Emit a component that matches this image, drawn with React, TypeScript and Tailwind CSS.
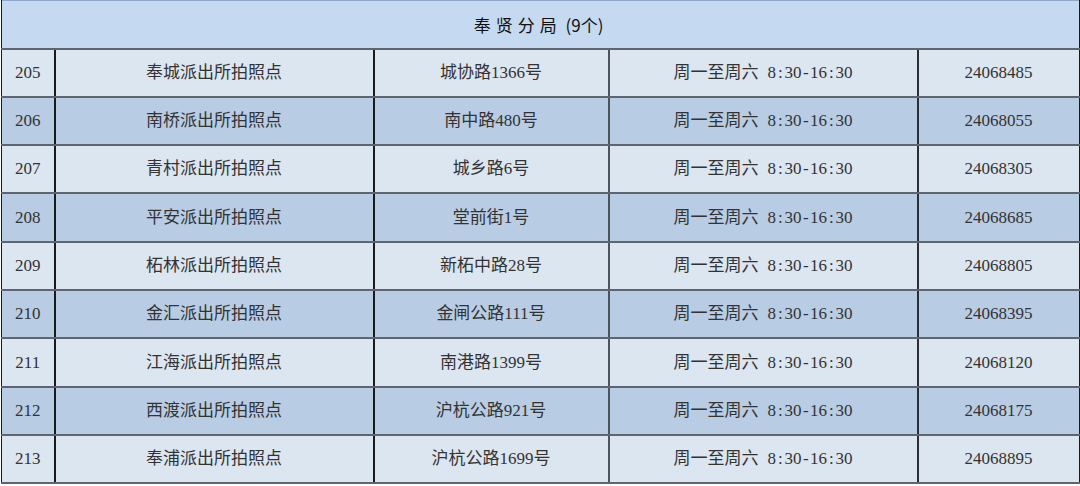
const rows = [
  ["205", "奉城派出所拍照点", "城协路1366号", "24068485"],
  ["206", "南桥派出所拍照点", "南中路480号", "24068055"],
  ["207", "青村派出所拍照点", "城乡路6号", "24068305"],
  ["208", "平安派出所拍照点", "堂前街1号", "24068685"],
  ["209", "柘林派出所拍照点", "新柘中路28号", "24068805"],
  ["210", "金汇派出所拍照点", "金闸公路111号", "24068395"],
  ["211", "江海派出所拍照点", "南港路1399号", "24068120"],
  ["212", "西渡派出所拍照点", "沪杭公路921号", "24068175"],
  ["213", "奉浦派出所拍照点", "沪杭公路1699号", "24068895"],
]

// half-width glyph box so ":" and "-" take the same width as a digit
function Hw({ c }: { c: string }) {
  return <span className="inline-block w-[8.5px] text-center">{c}</span>
}

export default function App() {
  return (
    <div className="w-[1080px] h-[486px] bg-white overflow-hidden">
      <table
        className="ml-px w-[1078px] border-collapse table-fixed text-[17px] text-[#333333]"
        style={{ fontFamily: '"Liberation Serif", "Noto Sans CJK SC", serif' }}
      >
        <colgroup>
          <col className="w-[53px]" />
          <col className="w-[319px]" />
          <col className="w-[235px]" />
          <col className="w-[309px]" />
          <col className="w-[162px]" />
        </colgroup>
        <thead>
          <tr className="h-[48px] bg-[#c5d9f1] border-t border-[#8ea9c8]">
            <th
              colSpan={5}
              className="pr-[4px] font-normal text-[17px] text-[#111111] border-b-2 border-b-[#5f656e] border-x border-x-[#1a1a1a]"
              style={{ fontFamily: '"Noto Sans CJK SC", sans-serif' }}
            >
              <span className="tracking-[5px]">奉贤分局</span>
              <span> (9个)</span>
            </th>
          </tr>
        </thead>
        <tbody>
          {rows.map((r, i) => (
            <tr
              key={r[0]}
              className={`h-[48.3px] ${i % 2 === 0 ? "bg-[#dce6f1]" : "bg-[#b8cce4]"}`}
            >
              <td className="text-center border-l border-l-[#1a1a1a] border-r-2 border-r-[#1a1a1a] border-b-2 border-b-[#5f656e]">{r[0]}</td>
              <td className="text-center border-r-2 border-r-[#1a1a1a] border-b-2 border-b-[#5f656e]">{r[1]}</td>
              <td className="text-center border-r-2 border-r-[#4d535b] border-b-2 border-b-[#5f656e]">{r[2]}</td>
              <td className="text-center border-r-2 border-r-[#2a2d33] border-b-2 border-b-[#5f656e]">
                周一至周六<span className="inline-block w-[9px]" />8<Hw c=":" />30<Hw c="-" />16<Hw c=":" />30
              </td>
              <td className="text-center border-r-2 border-r-[#1a1a1a] border-b-2 border-b-[#5f656e]">{r[3]}</td>
            </tr>
          ))}
        </tbody>
      </table>
    </div>
  )
}
